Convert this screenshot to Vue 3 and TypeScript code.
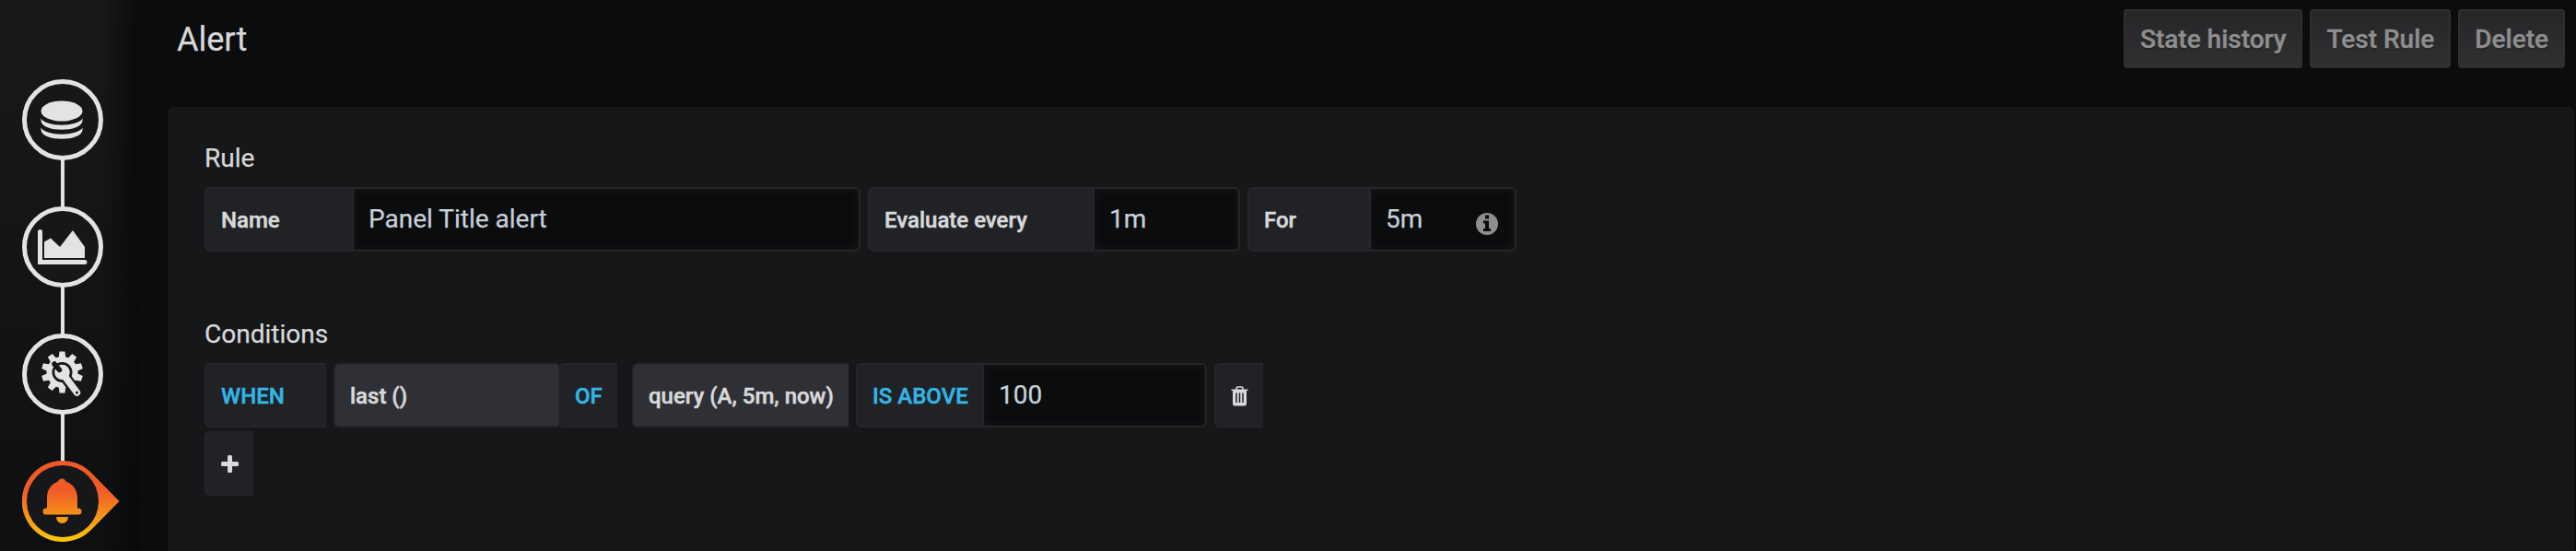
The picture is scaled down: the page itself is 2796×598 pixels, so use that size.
<script setup lang="ts">
const tabs = ['queries', 'visualization', 'general', 'alert'] as const
const actions: string[] = ['State history', 'Test Rule', 'Delete']
</script>

<template>
  <div class="editor">
    <aside class="sidebar">
      <div v-for="tab in tabs" :key="tab" class="tab" :class="{ active: tab === 'alert' }">
        <svg v-if="tab !== 'alert'" class="ring" viewBox="0 0 88 88">
          <circle cx="44" cy="44" r="41.5" fill="#161719" stroke="#e3e3e3" stroke-width="5" />
          <g v-if="tab === 'queries'" fill="#e3e3e3">
            <ellipse cx="43" cy="34.5" rx="22.5" ry="11" />
            <path d="M20.5 42.5C25 52 61 52 65.500 42.500V45C65 58 21 58 20.500 45Z" />
            <path d="M20.500 52.500C25 62 61 62 65.500 52.500V55C65 68 21 68 20.500 55Z" />
          </g>
          <g v-else-if="tab === 'visualization'" fill="#e3e3e3">
            <path d="M19.500 27.500V60.500H68" fill="none" stroke="#e3e3e3" stroke-width="5" stroke-linecap="round" />
            <path d="M24 38.500L31 34.500L41 44L55 26L68 44V56H24Z" />
          </g>
          <g v-else>
            <g fill="#e3e3e3">
              <circle cx="43.500" cy="42" r="17" />
              <path v-for="n in 10" :key="n" d="M40.500 19.500H46.500L47.500 28H39.500Z" :transform="`rotate(${n * 36} 43.500 42)`" />
            </g>
            <circle cx="43.500" cy="42" r="11" fill="#161719" />
            <path d="M45 45L59.500 64" stroke="#161719" stroke-width="12" stroke-linecap="round" />
            <circle cx="43.500" cy="42" r="8.300" fill="#e3e3e3" />
            <path d="M46 46L59.500 64" stroke="#e3e3e3" stroke-width="7.500" stroke-linecap="round" />
            <path d="M35 33L40.500 39.500" stroke="#161719" stroke-width="5.500" stroke-linecap="round" />
            <circle cx="59.500" cy="64" r="1.500" fill="#161719" />
          </g>
        </svg>
        <svg v-else class="ring pointer" viewBox="0 0 106 88">
          <defs>
            <linearGradient id="flame" gradientUnits="userSpaceOnUse" x1="0" y1="0" x2="0" y2="88">
              <stop offset="0" stop-color="#f05a28" />
              <stop offset=".36" stop-color="#f05a28" />
              <stop offset="1" stop-color="#fbca0a" />
            </linearGradient>
          </defs>
          <path d="M44 0A44 44 0 1 0 75 75L105.500 44L75 13A44 44 0 0 0 44 0Z" fill="url(#flame)" />
          <circle cx="44" cy="44" r="39" fill="#161719" />
          <g fill="url(#flame)">
            <path d="M39 22.500A4.500 4.500 0 0 1 47.500 22.500C55 25 60 32 60 40V51.500H61A3.500 3.500 0 0 1 61 58.500H26A3.500 3.500 0 0 1 26 51.500H27V40C27 32 31.500 25 39 22.500Z" />
            <path d="M37 61H50A6.500 7 0 0 1 37 61Z" />
          </g>
        </svg>
      </div>
    </aside>

    <main class="content">
      <header class="toolbar">
        <h2 class="title">Alert</h2>
        <button v-for="a in actions" :key="a" class="btn">{{ a }}</button>
      </header>

      <section class="panel">
        <h5 class="heading">Rule</h5>
        <div class="row">
          <span class="label w-name">Name</span>
          <span class="input w-title">Panel Title alert</span>
          <span class="label spaced w-every">Evaluate every</span>
          <span class="input w-time">1m</span>
          <span class="label spaced w-for">For</span>
          <span class="input w-time">5m
            <svg class="info" viewBox="0 0 24 24">
              <circle cx="12" cy="12" r="12" fill="#8e8e8e" />
              <path d="M10 2.500h4v4h-4zM8 8.500h6v8.500h2v3H8v-3h2v-5.500H8z" fill="#0b0c0e" />
            </svg>
          </span>
        </div>

        <h5 class="heading second">Conditions</h5>
        <div class="row">
          <span class="label keyword w-when">WHEN</span>
          <span class="label spaced dim w-last">last ()</span>
          <span class="label keyword w-of">OF</span>
          <span class="label dim w-query">query (A, 5m, now)</span>
          <span class="label keyword spaced w-above">IS ABOVE</span>
          <span class="input w-value">100</span>
          <span class="label spaced w-trash">
            <svg class="trash" viewBox="0 0 19 22">
              <path d="M6 4V2.500Q6 1 7.500 1H11.500Q13 1 13 2.500V4" fill="none" stroke="#d8d9da" stroke-width="1.600" />
              <path d="M.5 3.500H18.500V5H17V19Q17 21.500 15 21.500H4Q2 21.500 2 19V5H.5Z" fill="#d8d9da" />
              <path d="M6 7.500V18M9.500 7.500V18M13 7.500V18" stroke="#212124" stroke-width="1.500" />
            </svg>
          </span>
        </div>
        <div class="row add-row">
          <span class="label w-add">
            <svg class="plus" viewBox="0 0 19 19">
              <path d="M8.500 0h2q1.500 0 1.500 1.500V7h5.500Q19 7 19 8.500v2q0 1.500-1.500 1.500H12v5.500q0 1.500-1.500 1.500h-2Q7 19 7 17.500V12H1.500Q0 12 0 10.500v-2Q0 7 1.500 7H7V1.500Q7 0 8.500 0z" fill="#d8d9da" />
            </svg>
          </span>
        </div>
      </section>
    </main>
  </div>
</template>

<style>
body {
  margin: 0;
  background: #0b0c0e;
}
</style>

<style scoped>
.editor {
  display: flex;
  box-sizing: border-box;
  height: 598px;
  overflow: hidden;
  background: #0b0c0e;
  color: #d8d9da;
  font-family: Roboto, "Liberation Sans", sans-serif;
  -webkit-text-stroke: .25px currentColor;
}
.sidebar {
  flex: none;
  box-sizing: border-box;
  width: 152px;
  padding: 86px 0 0 24px;
  display: flex;
  flex-direction: column;
  gap: 50px;
  background: linear-gradient(90deg, transparent 110px, rgba(8, 9, 11, .85) 148px), linear-gradient(180deg, #18191b, #0e0f11);
}
.tab {
  position: relative;
  height: 88px;
  flex: none;
}
.tab:not(.active)::after {
  content: "";
  position: absolute;
  left: 42px;
  top: 87px;
  width: 4px;
  height: 52px;
  background: #e3e3e3;
}
.ring {
  display: block;
  width: 88px;
  height: 88px;
}
.ring.pointer {
  width: 106px;
}
.content {
  flex: 1;
  padding: 0 2px 0 30px;
  display: flex;
  flex-direction: column;
}
.toolbar {
  display: flex;
  align-items: flex-start;
  box-sizing: border-box;
  height: 116px;
  gap: 8px;
  padding: 10px 10px 0;
}
.title {
  flex: 1;
  margin: 9px 0 0;
  font-size: 36px;
  line-height: 48px;
  font-weight: 400;
}
.btn {
  box-sizing: border-box;
  height: 64px;
  padding: 1px 16px 0;
  border: 2px solid #2f2f32;
  border-radius: 4px;
  background: linear-gradient(180deg, #262628, #303032);
  color: #8e8e8e;
  font: 500 28px/56px Roboto, sans-serif;
  -webkit-text-stroke: .4px currentColor;
  text-shadow: 0 2px 0 rgba(0, 0, 0, .3);
}
.panel {
  flex: 1;
  padding: 38px 40px 0;
  border-radius: 6px 6px 0 0;
  background: #161719;
}
.heading {
  margin: 0 0 13px;
  font-size: 28px;
  line-height: 36px;
  font-weight: 400;
}
.heading.second {
  margin-top: 72px;
}
.row {
  display: flex;
}
.add-row {
  margin-top: 4px;
}
.label,
.input {
  box-sizing: border-box;
  display: flex;
  align-items: center;
  height: 70px;
  border: 2px solid #262628;
  white-space: pre;
}
.label {
  padding: 2px 0 0 16px;
  border-right-width: 0;
  border-radius: 6px 0 0 6px;
  background: #212226;
  font-size: 24px;
  font-weight: 500;
  -webkit-text-stroke: .5px currentColor;
}
.label.dim {
  background: #2f3036;
}
.label.keyword {
  color: #33b5e5;
}
.input {
  position: relative;
  padding: 0 0 1px 16px;
  border-radius: 0 6px 6px 0;
  background: #0b0c0e;
  box-shadow: inset 0 0 10px #17181a;
  color: #c7d0d9;
  font-size: 28px;
}
.spaced {
  margin-left: 8px;
}
.w-name { width: 160px; }
.w-title { width: 552px; }
.w-every { width: 244px; }
.w-time { width: 160px; }
.w-for { width: 132px; }
.w-when { width: 132px; }
.w-last { width: 244px; }
.w-of { width: 64px; }
.w-query { width: 235px; margin-left: 16px; }
.w-above { width: 137px; }
.w-value { width: 244px; }
.w-trash { width: 53px; }
.w-add { width: 53px; padding-top: 0; }
.info {
  position: absolute;
  right: 18px;
  top: 26px;
  width: 24px;
  height: 24px;
}
.trash {
  width: 19px;
  height: 22px;
}
.plus {
  width: 19px;
  height: 19px;
}
</style>
